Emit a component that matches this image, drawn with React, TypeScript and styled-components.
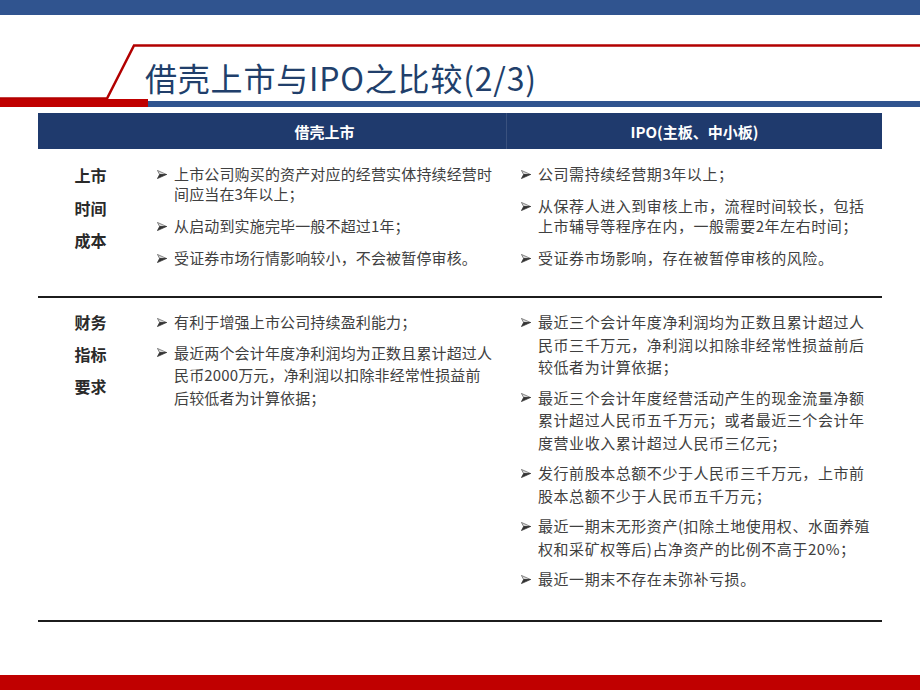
import React from "react";
import styled, { createGlobalStyle } from "styled-components";

const GlobalStyle = createGlobalStyle`
  html, body { margin: 0; padding: 0; background: #ffffff; }
  body { font-family: "Noto Sans CJK SC", "Noto Sans", sans-serif; }
`;

const Slide = styled.div`
  width: 920px;
  height: 690px;
  display: flex;
  flex-direction: column;
  overflow: hidden;
  background: #ffffff;
`;

const TopBar = styled.div`
  flex: none;
  height: 15px;
  background: #30548f;
`;

const TitleArea = styled.div`
  position: relative;
  flex: none;
  height: 84px;
  box-sizing: border-box;
  padding: 44px 0 0 145px;
`;

const Frame = styled.svg`
  position: absolute;
  left: 0;
  top: 0;
`;

const Title = styled.h1`
  position: relative;
  margin: 0;
  font-size: 32px;
  line-height: 36px;
  font-weight: 400;
  letter-spacing: 0.8px;
  color: #213f6b;
  white-space: nowrap;
`;

const BarRow = styled.div`
  flex: none;
  display: flex;
  height: 8px;
`;

const RedSeg = styled.div`
  width: 148px;
  background: #c00000;
`;

const BlueSeg = styled.div`
  flex: 1;
  height: 6px;
  align-self: flex-end;
  background: #30548f;
`;

const Table = styled.div`
  flex: none;
  margin: 6px 38px 0;
  display: flex;
  flex-direction: column;
`;

const HeaderRow = styled.div`
  display: grid;
  grid-template-columns: 105px 363px 1fr;
  height: 36px;
  background: #1f3a6d;
`;

const HeaderCell = styled.div<{ $divider?: boolean }>`
  display: flex;
  align-items: center;
  justify-content: center;
  color: #ffffff;
  font-size: 15px;
  font-weight: 700;
  border-left: ${(p) => (p.$divider ? "1px solid rgba(255,255,255,0.12)" : "none")};
`;

const Row = styled.div<{ $height: number }>`
  display: grid;
  grid-template-columns: 105px 363px 1fr;
  height: ${(p) => p.$height}px;
  box-sizing: border-box;
  border-bottom: 2px solid #1c1c1c;
`;

const LabelCell = styled.div<{ $top: number; $lh: number }>`
  padding-top: ${(p) => p.$top}px;
  text-align: center;
  font-size: 16px;
  font-weight: 700;
  line-height: ${(p) => p.$lh}px;
  color: #2a2a2a;
`;

const BulletCell = styled.div<{ $top: number; $left: number }>`
  padding-top: ${(p) => p.$top}px;
  padding-left: ${(p) => p.$left}px;
`;

const Bullet = styled.div<{ $gap: number; $lh: number }>`
  display: flex;
  margin-bottom: ${(p) => p.$gap}px;
  line-height: ${(p) => p.$lh}px;
`;

const ArrowBox = styled.span<{ $lh: number }>`
  flex: none;
  width: 17px;
  height: ${(p) => p.$lh}px;
  display: flex;
  align-items: center;
`;

const BulletText = styled.div<{ $ls: number }>`
  font-size: 15px;
  color: #404040;
  white-space: nowrap;
  letter-spacing: ${(p) => p.$ls}px;
`;

const Line = styled.div``;

const Spacer = styled.div`
  flex: 1;
`;

const BottomBar = styled.div`
  flex: none;
  height: 15px;
  background: #c00000;
`;

function ArrowHead() {
  return (
    <svg width="10" height="9" viewBox="0 0 10 9">
      <polygon points="0.4,0.4 9.6,4.5 2.6,4.5" fill="#d6d6d6" stroke="#5a5a5a" strokeWidth="0.7" strokeLinejoin="round" />
      <polygon points="2.6,4.5 9.6,4.5 0.4,8.6" fill="#333333" stroke="#333333" strokeWidth="0.7" strokeLinejoin="round" />
    </svg>
  );
}

type RowData = {
  label: string[];
  height: number;
  labelTop: number;
  labelLh: number;
  bulletTop: number;
  lh: number;
  gap: number;
  left: string[][];
  right: string[][];
};

const rows: RowData[] = [
  {
    label: ["上市", "时间", "成本"],
    height: 149,
    labelTop: 10,
    labelLh: 32.5,
    bulletTop: 15,
    lh: 20,
    gap: 12,
    left: [
      ["上市公司购买的资产对应的经营实体持续经营时", "间应当在3年以上；"],
      ["从启动到实施完毕一般不超过1年；"],
      ["受证券市场行情影响较小，不会被暂停审核。"],
    ],
    right: [
      ["公司需持续经营期3年以上；"],
      ["从保荐人进入到审核上市，流程时间较长，包括", "上市辅导等程序在内，一般需要2年左右时间；"],
      ["受证券市场影响，存在被暂停审核的风险。"],
    ],
  },
  {
    label: ["财务", "指标", "要求"],
    height: 324,
    labelTop: 8,
    labelLh: 32,
    bulletTop: 13,
    lh: 22.5,
    gap: 8,
    left: [
      ["有利于增强上市公司持续盈利能力；"],
      ["最近两个会计年度净利润均为正数且累计超过人", "民币2000万元，净利润以扣除非经常性损益前", "后较低者为计算依据；"],
    ],
    right: [
      ["最近三个会计年度净利润均为正数且累计超过人", "民币三千万元，净利润以扣除非经常性损益前后", "较低者为计算依据；"],
      ["最近三个会计年度经营活动产生的现金流量净额", "累计超过人民币五千万元；或者最近三个会计年", "度营业收入累计超过人民币三亿元；"],
      ["发行前股本总额不少于人民币三千万元，上市前", "股本总额不少于人民币五千万元；"],
      ["最近一期末无形资产(扣除土地使用权、水面养殖", "权和采矿权等后)占净资产的比例不高于20%；"],
      ["最近一期末不存在未弥补亏损。"],
    ],
  },
];

function Bullets({ items, lh, gap, ls }: { items: string[][]; lh: number; gap: number; ls: number }) {
  return (
    <>
      {items.map((lines, i) => (
        <Bullet key={i} $gap={gap} $lh={lh}>
          <ArrowBox $lh={lh}>
            <ArrowHead />
          </ArrowBox>
          <BulletText $ls={ls}>
            {lines.map((l, j) => (
              <Line key={j}>{l}</Line>
            ))}
          </BulletText>
        </Bullet>
      ))}
    </>
  );
}

export default function App() {
  return (
    <>
      <GlobalStyle />
      <Slide>
        <TopBar />
        <TitleArea>
          <Frame width="920" height="84" viewBox="0 0 920 84">
            <polyline
              points="920,30.5 134,30.5 107,83.5 0,83.5"
              fill="none"
              stroke="#b20000"
              strokeWidth="2.5"
            />
          </Frame>
          <Title>借壳上市与IPO之比较(2/3)</Title>
        </TitleArea>
        <BarRow>
          <RedSeg />
          <BlueSeg />
        </BarRow>
        <Table>
          <HeaderRow>
            <HeaderCell />
            <HeaderCell>借壳上市</HeaderCell>
            <HeaderCell $divider>IPO(主板、中小板)</HeaderCell>
          </HeaderRow>
          {rows.map((r, i) => (
            <Row key={i} $height={r.height}>
              <LabelCell $top={r.labelTop} $lh={r.labelLh}>
                {r.label.map((t) => (
                  <div key={t}>{t}</div>
                ))}
              </LabelCell>
              <BulletCell $top={r.bulletTop} $left={14}>
                <Bullets items={r.left} lh={r.lh} gap={r.gap} ls={0.15} />
              </BulletCell>
              <BulletCell $top={r.bulletTop} $left={15}>
                <Bullets items={r.right} lh={r.lh} gap={r.gap} ls={0.55} />
              </BulletCell>
            </Row>
          ))}
        </Table>
        <Spacer />
        <BottomBar />
      </Slide>
    </>
  );
}
